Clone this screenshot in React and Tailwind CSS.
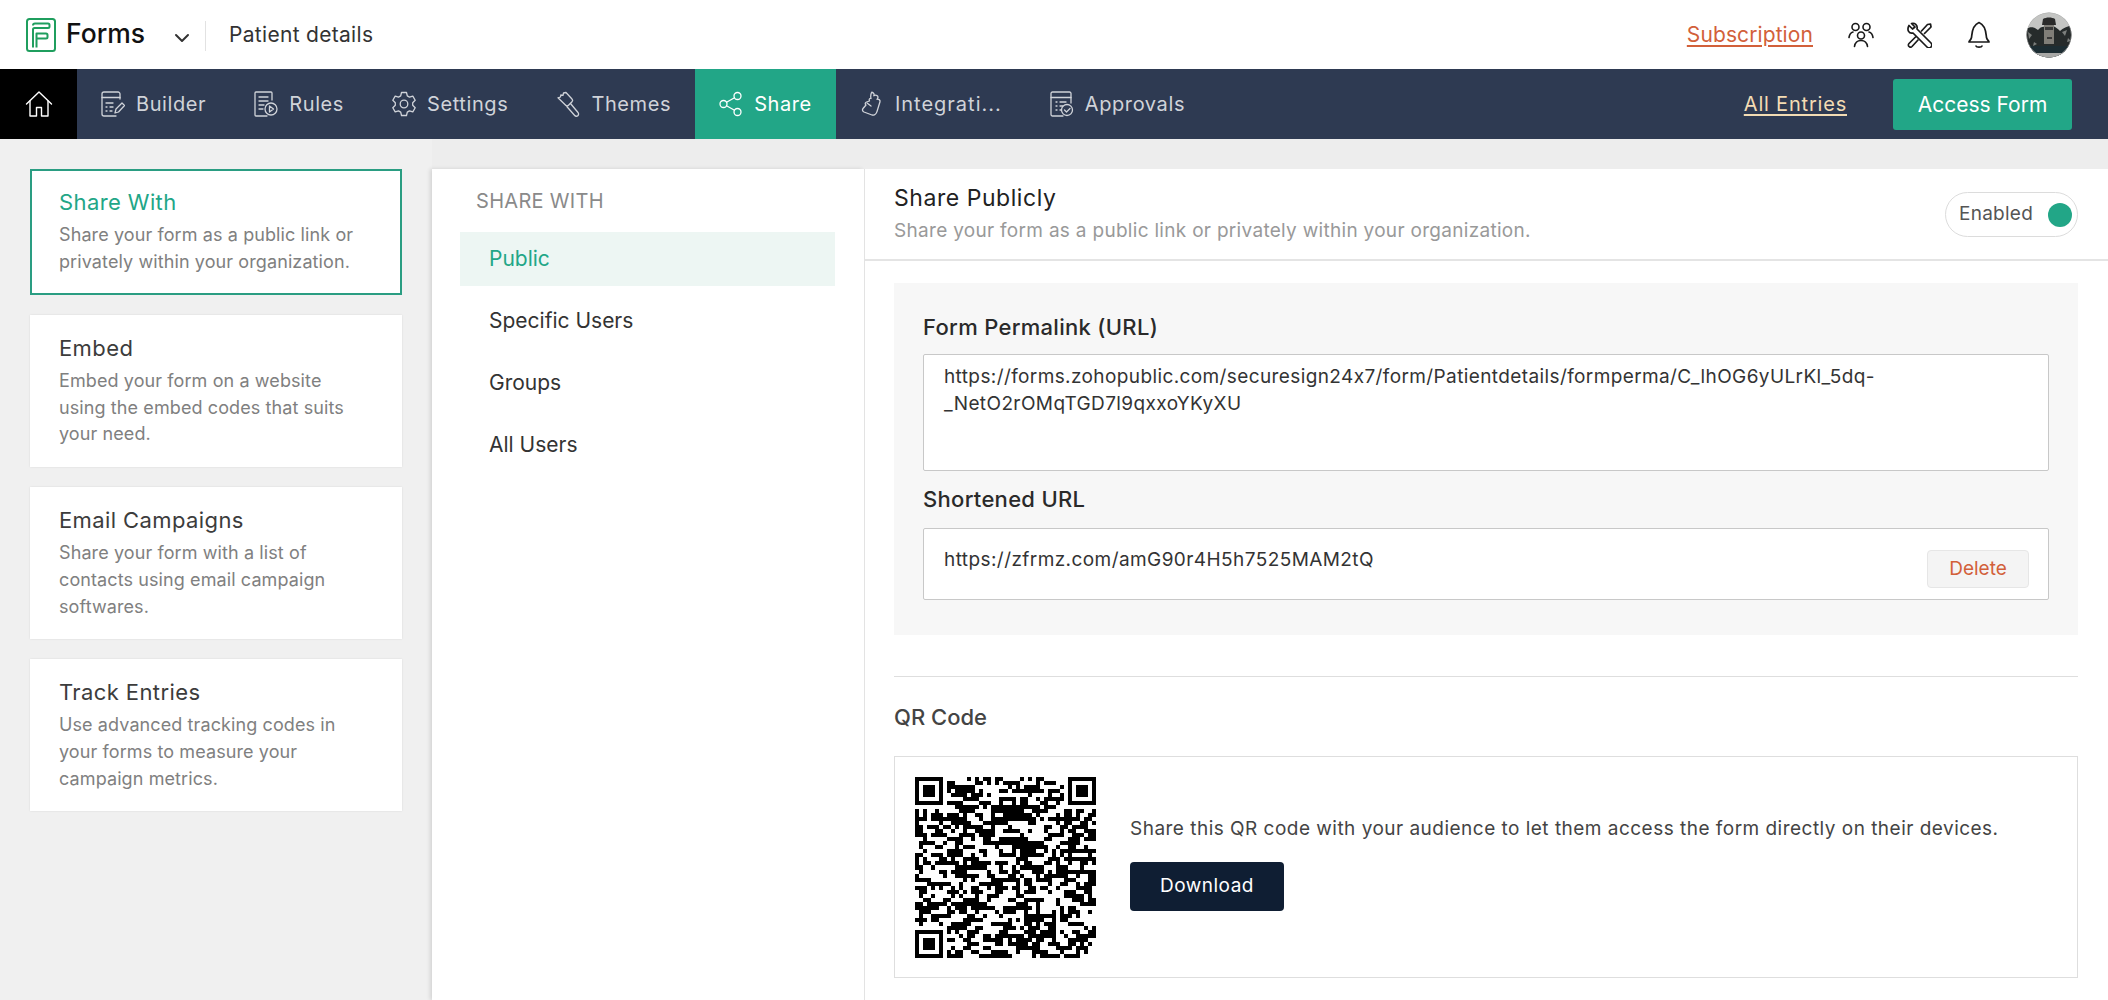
import { useMemo } from 'react';
import { ChevronDown } from 'lucide-react';

const IconProps = { fill: 'none', stroke: 'currentColor', strokeWidth: 1.3, strokeLinecap: 'round', strokeLinejoin: 'round' };

const HomeIcon = () => (
  <svg width="28" height="28" viewBox="0 0 28 28" {...IconProps} strokeWidth="1.4">
    <path d="M1.500 14 14 2l12.500 12" />
    <path d="M5 11v15h6.500v-8.500h5V26H23V11" />
  </svg>
);

const BuilderIcon = () => (
  <svg width="24" height="26" viewBox="0 0 24 26" {...IconProps}>
    <path d="M19 8V3a2 2 0 0 0-2-2H3a2 2 0 0 0-2 2v20a2 2 0 0 0 2 2h12" />
    <path d="M1 6.500h18" />
    <path d="M5 12h7M5 16h1M9 16h3M5 20h1M9 20h2" />
    <path d="m14 22 1-4 6-6 2.500 2.500-6 6.500z" />
  </svg>
);

const RulesIcon = () => (
  <svg width="24" height="26" viewBox="0 0 24 26" {...IconProps}>
    <path d="M18 9V2a1 1 0 0 0-1-1H2a1 1 0 0 0-1 1v22a1 1 0 0 0 1 1h11" />
    <path d="M5 6h9M5 10h9M5 14h5M5 18h4" />
    <circle cx="17" cy="18" r="6" />
    <path d="m15.500 15 4 3-4 3z" />
  </svg>
);

const SettingsIcon = () => (
  <svg width="24" height="26" viewBox="0 0 24 26" {...IconProps}>
    <path d="M9.500 1.500h5l.8 3.400 2.200 1.200 3.300-1 2.400 4.200-2.500 2.400v2.600l2.500 2.400-2.400 4.200-3.300-1-2.200 1.200-.8 3.400h-5l-.8-3.400-2.200-1.200-3.300 1L.8 16.700l2.500-2.400v-2.600L.8 9.300l2.400-4.200 3.300 1 2.200-1.200z" />
    <circle cx="12" cy="13" r="3.800" />
  </svg>
);

const ThemesIcon = () => (
  <svg width="24" height="26" viewBox="0 0 24 26" {...IconProps}>
    <path d="M10 1.500 16 8a2 2 0 0 1 0 2.800l-3.500 3.500a2 2 0 0 1-2.800 0L2 6.800l2.500-.8.300-2 2.200.3.500-2.300z" />
    <path d="m14.500 12.500 7.500 9a2.200 2.200 0 0 1-3.300 3l-7.700-8.800" />
  </svg>
);

const ShareIcon = () => (
  <svg width="24" height="26" viewBox="0 0 24 26" {...IconProps}>
    <circle cx="18.500" cy="5" r="3.500" />
    <circle cx="4.500" cy="13" r="3.500" />
    <circle cx="18.500" cy="21" r="3.500" />
    <path d="m7.500 11.200 8-4.500M7.500 14.800l8 4.500" />
  </svg>
);

const IntegrationIcon = () => (
  <svg width="24" height="26" viewBox="0 0 24 26" {...IconProps}>
    <path d="M12 1.500c2 .2 2.500 2 1.800 3.300 1.500-1 4-.8 4.200 1.200.1 1-.8 1.800-1 2.300 1.300-.5 3.500.5 3 2.500L17 20.500c-.8 2.500-3 4-5 3.500l-8-3c-1.500-.8-2-2.200-1-3.500l3-3.500c-1.200-.8-1-2.500.5-3l3-1c-1-2 .5-3 1.500-2.500-.8-2 .2-6 1-6.500z" />
    <path d="m7 12 4 3" />
  </svg>
);

const ApprovalsIcon = () => (
  <svg width="24" height="26" viewBox="0 0 24 26" {...IconProps}>
    <path d="M21 12V2.500a1.500 1.500 0 0 0-1.500-1.500h-17A1.500 1.500 0 0 0 1 2.500v21A1.500 1.500 0 0 0 2.500 25H13" />
    <path d="M1 6.500h20" />
    <path d="M6 11h1M10 11h6M6 15h1M10 15h3M6 19h1M10 19h1" />
    <circle cx="17" cy="19" r="5.500" />
    <path d="m14.500 19 2 2 3.500-3.500" />
  </svg>
);

const PeopleIcon = () => (
  <svg width="26" height="26" viewBox="0 0 26 26" {...IconProps} strokeWidth="1.600">
    <circle cx="7.500" cy="5" r="3.500" />
    <circle cx="18.500" cy="5" r="3.500" />
    <circle cx="13" cy="13.500" r="3.500" />
    <path d="M1 15.500c.5-3 2-5 4-5.500M25 15.500c-.5-3-2-5-4-5.500M6.500 24.500c.5-3.500 3-6 6.500-6s6 2.500 6.500 6" />
  </svg>
);

const ToolsIcon = () => (
  <svg width="26" height="26" viewBox="0 0 26 26" {...IconProps} strokeWidth="1.700">
    <path d="M3 3.500 6.500 7 9 5 5.500 1.500C8.500.5 12 3 11 7l14 14a2.500 2.500 0 0 1-4 4L7 11C3 12 .5 8 3 3.500z" />
    <path d="m15.500 9 6-6.500L24.500 2 25 5l-6.500 6.500M9.500 15l-6.500 6.500a2 2 0 0 0 3 3l6-6.500" />
  </svg>
);

const BellIcon = () => (
  <svg width="24" height="28" viewBox="0 0 24 28" {...IconProps} strokeWidth="1.700">
    <path d="M2 21c0-1 2-2 2.500-4.500S4.500 4.500 12 1.500c7.500 3 7 12.500 7.500 15S22 20 22 21z" />
    <path d="M9 25c.5 1.600 5.500 1.600 6 0" />
  </svg>
);

const LogoIcon = () => (
  <svg width="30" height="34" viewBox="0 0 30 34" fill="none" stroke="#1f9e5e" strokeWidth="2" strokeLinejoin="round">
    <rect x="1" y="1" width="28" height="32" rx="2.500" />
    <path d="M7 29.500V11.500a1.500 1.500 0 0 1 1.500-1.500H22a1.500 1.500 0 0 0 1.500-1.500V7A1.500 1.500 0 0 0 22 5.500H9A2 2 0 0 0 7 7.500" />
    <path d="M10.500 29.500V15.500H20a1.500 1.500 0 0 1 1.500 1.500v2a1.500 1.500 0 0 1-1.500 1.500h-9.500" />
  </svg>
);

// rough stand-in for the profile photo
const Avatar = () => (
  <svg width="46" height="46" viewBox="0 0 46 46" className="shrink-0">
    <defs>
      <clipPath id="avatar-clip"><circle cx="23" cy="23" r="22.500" /></clipPath>
    </defs>
    <g clipPath="url(#avatar-clip)">
      <rect width="46" height="46" fill="#c4c5c3" />
      <path d="M0 17c5-3 8-2 12 1 2-3 5-4 8-3l7-1c3 1 5 3 7 5 3-3 7-5 12-5v32H0z" fill="#262b2b" />
      <path d="M2 20l4 3-3 4zM36 20l5-2-2 6zM42 26l3 3-4 1zM8 30l3 2-4 2z" fill="#7c7f7d" />
      <path d="M18 11h10v21H18z" fill="#807e78" />
      <path d="M17 7c3-2 9-2 12 0l1 6H16z" fill="#2a2a2a" />
      <path d="M19 15h8v3h-8zM21 25h5v2h-5z" fill="#3a3a3a" />
      <path d="M0 34h46v12H0z" fill="#1d2d33" />
      <path d="M4 41h38v5H4z" fill="#a8a8a6" />
      <circle cx="23" cy="23" r="22.500" fill="none" stroke="#a8a8a8" strokeWidth="1" />
    </g>
  </svg>
);

// finder square of the qr, in module units
function finderPath(x, y) {
  return `M${x} ${y}h7v7h-7zM${x + 1} ${y + 1}v5h5v-5zM${x + 2} ${y + 2}h3v3h-3z`;
}

const QrCode = () => {
  const d = useMemo(() => {
    const size = 45;
    let seed = 20240731;
    const rand = () => {
      seed = (seed * 1664525 + 1013904223) >>> 0;
      return seed / 4294967296;
    };
    const inFinder = (x, y) =>
      (x < 8 && y < 8) || (x > size - 9 && y < 8) || (x < 8 && y > size - 9);
    let out = '';
    let prev = false;
    for (let y = 0; y < size; y++) {
      for (let x = 0; x < size; x++) {
        if (inFinder(x, y)) continue;
        prev = rand() < (prev ? 0.62 : 0.42);
        if (prev) out += `M${x} ${y}h1v1h-1z`;
      }
    }
    return out + finderPath(0, 0) + finderPath(size - 7, 0) + finderPath(0, size - 7);
  }, []);
  return (
    <svg width="181" height="181" viewBox="0 0 45 45" shapeRendering="crispEdges" className="shrink-0">
      <path d={d} fill="#000" fillRule="evenodd" />
    </svg>
  );
};

const tabs = [
  { label: 'Builder', Icon: BuilderIcon, track: 'tracking-[0.6px]' },
  { label: 'Rules', Icon: RulesIcon, track: 'tracking-[0.6px]' },
  { label: 'Settings', Icon: SettingsIcon, track: 'tracking-[0.6px]' },
  { label: 'Themes', Icon: ThemesIcon, track: 'tracking-[0.6px]' },
  { label: 'Share', Icon: ShareIcon, active: true, track: 'tracking-[0.6px]' },
  { label: 'Integrati...', Icon: IntegrationIcon, track: 'tracking-[1px]' },
  { label: 'Approvals', Icon: ApprovalsIcon, track: 'tracking-[0.6px]' },
];

const cards = [
  { title: 'Share With', lines: ['Share your form as a public link or', 'privately within your organization.'], active: true },
  { title: 'Embed', lines: ['Embed your form on a website', 'using the embed codes that suits', 'your need.'] },
  { title: 'Email Campaigns', lines: ['Share your form with a list of', 'contacts using email campaign', 'softwares.'] },
  { title: 'Track Entries', lines: ['Use advanced tracking codes in', 'your forms to measure your', 'campaign metrics.'] },
];

const shareOptions = ['Public', 'Specific Users', 'Groups', 'All Users'];

export default function App() {
  return (
    <div className="w-full h-[1000px] overflow-hidden flex flex-col bg-[#ededed] font-['Inter',sans-serif] [font-feature-settings:'calt'_0]">
      {/* Top bar */}
      <header className="h-[69px] shrink-0 bg-white flex items-center pl-[26px] pr-[36px]">
        <LogoIcon />
        <span className="ml-[10px] -mt-[2px] text-[26.500px] font-medium text-[#111]">Forms</span>
        <ChevronDown className="ml-[25px] mt-[6px] h-[24px] w-[24px] text-[#333]" strokeWidth={2} />
        <div className="ml-[11px] mt-[3px] h-[30px] w-px bg-[#e2e2e2]" />
        <span className="ml-[23px] mt-[1px] text-[21px] text-[#333] tracking-[0.3px]">Patient details</span>
        <a className="ml-auto text-[21px] tracking-[0.1px] text-[#d2603a] underline underline-offset-[3px]">Subscription</a>
        <div className="ml-[35px] text-[#1a1a1a]"><PeopleIcon /></div>
        <div className="ml-[32px] text-[#1a1a1a]"><ToolsIcon /></div>
        <div className="ml-[35px] text-[#1a1a1a]"><BellIcon /></div>
        <div className="ml-[35px]"><Avatar /></div>
      </header>

      {/* Nav */}
      <nav className="h-[70px] shrink-0 bg-[#2e3a52] flex items-stretch pr-[36px] text-[#d0d3d9]">
        <div className="w-[77px] bg-black flex items-center justify-center text-white">
          <HomeIcon />
        </div>
        {tabs.map(({ label, Icon, active, track }) => (
          <div
            key={label}
            className={`flex items-center gap-[11px] px-[24px] text-[20px] ${track} ${active ? 'bg-[#22a687] text-white' : ''}`}
          >
            <Icon />
            {label}
          </div>
        ))}
        <a className="ml-auto self-center text-[20px] tracking-[0.8px] text-[#f3dcb4] underline underline-offset-[3px]">All Entries</a>
        <button className="ml-[46px] mt-[1px] self-center h-[51px] w-[179px] rounded-[3px] bg-[#22a687] text-white text-[21px]">Access Form</button>
      </nav>

      <div className="flex-1 min-h-0 flex">
        {/* Left cards */}
        <aside className="w-[432px] shrink-0 bg-[#f0f0f0] pt-[30px] pl-[30px] flex flex-col gap-[20px]">
          {cards.map((card) => (
            <div
              key={card.title}
              className={`w-[372px] bg-white ${card.active ? 'h-[126px] border-2 border-[#2a9d82] px-[27px] pt-[15px]' : 'px-[29px] pt-[17px] pb-[19px] shadow-[0_0_2px_rgba(0,0,0,0.1)]'}`}
            >
              <h3 className={`text-[22px] leading-[32px] tracking-[0.4px] ${card.active ? 'text-[#22a687]' : 'text-[#3c3c3c]'}`}>{card.title}</h3>
              <p className="mt-[4px] text-[18px] leading-[26.700px] tracking-[0.1px] text-[#808080]">
                {card.lines.map((line) => (
                  <span key={line} className="block whitespace-nowrap">{line}</span>
                ))}
              </p>
            </div>
          ))}
        </aside>

        {/* Middle list */}
        <section className="w-[432px] mt-[30px] shrink-0 bg-white shadow-[-2px_0_4px_rgba(0,0,0,0.12)] pt-[18px] pl-[28px]">
          <h4 className="pl-[16px] text-[20px] leading-[28px] tracking-[0.3px] text-[#8a8a8a]">SHARE WITH</h4>
          <ul className="mt-[17px] flex flex-col gap-[8px]">
            {shareOptions.map((option, i) => (
              <li
                key={option}
                className={`w-[375px] h-[53.800px] flex items-center pl-[29px] text-[21px] ${i === 0 ? 'bg-[#edf6f3] text-[#22a687]' : 'text-[#333]'}`}
              >
                {option}
              </li>
            ))}
          </ul>
        </section>

        {/* Right panel */}
        <main className="flex-1 min-w-0 mt-[30px] bg-white border-l border-[#e3e3e3]">
          <div className="h-[92px] border-b-2 border-[#e4e4e4] pl-[29px] pr-[30px] flex items-center justify-between">
            <div className="-mt-[1px]">
              <h2 className="text-[23px] leading-[30px] tracking-[0.55px] text-[#222]">Share Publicly</h2>
              <p className="mt-[4px] text-[19px] leading-[28px] tracking-[0.3px] text-[#999]">Share your form as a public link or privately within your organization.</p>
            </div>
            <div className="mt-[1px] w-[133px] h-[45px] rounded-full border border-[#dcdcdc] flex items-center pl-[13px]">
              <span className="-mt-[1px] text-[19px] tracking-[0.25px] text-[#555]">Enabled</span>
              <span className="ml-[15px] h-[24px] w-[24px] rounded-full bg-[#22a687]" />
            </div>
          </div>

          <div className="pl-[29px] pr-[30px] pt-[22px]">
            <div className="h-[352px] bg-[#f7f7f7] px-[29px] pt-[29px]">
              <label className="block text-[22px] leading-[30px] tracking-[0.3px] font-medium text-[#2a2a2a]">Form Permalink (URL)</label>
              <div className="mt-[12px] h-[117px] bg-white border border-[#c8c8c8] rounded-[2px] pl-[20px] pr-[19px] pt-[9px] text-[19px] leading-[26.500px] tracking-[0.39px] text-[#333]">
                <div className="whitespace-nowrap">https://forms.zohopublic.com/securesign24x7/form/Patientdetails/formperma/C_lhOG6yULrKl_5dq-</div>
                <div className="whitespace-nowrap">_NetO2rOMqTGD7l9qxxoYKyXU</div>
              </div>
              <label className="mt-[13px] block text-[22px] leading-[30px] tracking-[0.3px] font-medium text-[#2a2a2a]">Shortened URL</label>
              <div className="mt-[14px] h-[72px] bg-white border border-[#c8c8c8] rounded-[2px] pl-[20px] pr-[19px] flex items-center justify-between">
                <span className="-mt-[7px] text-[19px] tracking-[0.42px] text-[#333]">https://zfrmz.com/amG90r4H5h7525MAM2tQ</span>
                <button className="mt-[10px] w-[102px] h-[38px] rounded-[4px] bg-[#f4f4f4] border border-[#e6e6e6] text-[19px] text-[#d2603a]">Delete</button>
              </div>
            </div>

            <div className="mt-[41px] border-t border-[#dedede]" />
            <h3 className="mt-[25px] text-[22px] leading-[30px] font-medium text-[#444]">QR Code</h3>
            <div className="mt-[24px] h-[222px] border border-[#dedede] pl-[20px] flex items-center gap-[34px]">
              <QrCode />
              <div className="-mt-[8px]">
                <p className="text-[19px] leading-[28px] tracking-[0.48px] text-[#444]">Share this QR code with your audience to let them access the form directly on their devices.</p>
                <button className="mt-[19px] w-[154px] h-[49px] rounded-[4px] bg-[#0f1e33] text-white text-[19px] tracking-[0.5px]">Download</button>
              </div>
            </div>
          </div>
        </main>
      </div>
    </div>
  );
}
